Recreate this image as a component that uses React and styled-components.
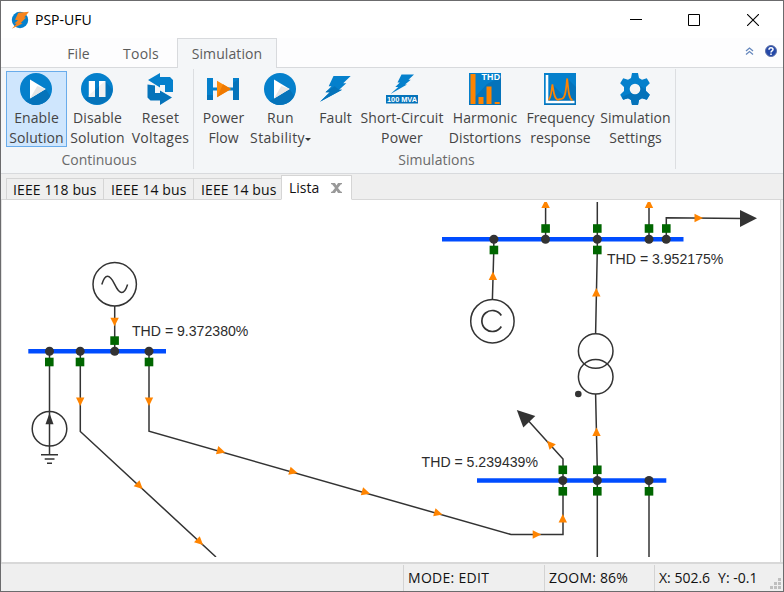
import React from "react";
import styled, { createGlobalStyle } from "styled-components";

const Global = createGlobalStyle`
  * { box-sizing: border-box; }
  html, body { margin: 0; padding: 0; overflow: hidden; }
  body { font-family: "Open Sans", "Noto Sans", sans-serif; font-size: 14px; color: #444; }
`;

const Window = styled.div`
  width: 784px;
  height: 592px;
  border: 1px solid #6b6b6d;
  background: #fff;
  display: flex;
  flex-direction: column;
`;

const TitleBar = styled.header`
  height: 37px;
  display: flex;
  align-items: center;
  padding-left: 10px;
  flex: none;
`;

const Label = styled.span`
  font-stretch: 90%;
  letter-spacing: ${(p) => p.$track || 0}px;
  white-space: pre;
`;

const AppTitle = styled(Label)`
  color: #000;
  margin: 0 0 1px 6px;
`;

const Controls = styled.div`
  margin-left: auto;
  margin-right: 1px;
  display: flex;
`;

const Control = styled.div`
  width: 58.5px;
  height: 36px;
  display: grid;
  place-items: center;
`;

const Menu = styled.nav`
  height: 30px;
  flex: none;
  display: flex;
  background: #fdfdfe;
  box-shadow: inset 0 -1px #d8dadd;
`;

const MenuItem = styled.div`
  width: ${(p) => p.$w}px;
  margin-left: ${(p) => p.$gap || 0}px;
  height: 30px;
  line-height: 29px;
  text-align: center;
  color: #5c5c5c;
  border: ${(p) => (p.$active ? "1px solid #d8dadd" : "1px solid transparent")};
  border-bottom: 0;
  background: ${(p) => (p.$active ? "#f4f6f8" : "transparent")};
`;

const MenuTools = styled.div`
  margin-left: auto;
  display: flex;
  align-items: center;
  gap: 11px;
  padding: 0 6px 4px 0;
`;

const Ribbon = styled.section`
  height: 106px;
  flex: none;
  display: flex;
  background: #f4f6f8;
  border-bottom: 1px solid #d8dadd;
  padding-top: 1px;
`;

const Group = styled.div`
  width: ${(p) => p.$w}px;
  height: 100px;
  border-right: 1px solid #dcdee1;
  display: flex;
  flex-direction: column;
`;

const GroupButtons = styled.div`
  display: flex;
  padding: 2px 0 0 ${(p) => p.$pad}px;
`;

const GroupTitle = styled.div`
  line-height: 20px;
  margin-top: 3px;
  text-align: center;
  color: #6a6a6a;
  padding-left: ${(p) => p.$shift || 0}px;
`;

const Button = styled.div`
  width: ${(p) => p.$w}px;
  height: 76px;
  border: 1px solid ${(p) => (p.$active ? "#69aceb" : "transparent")};
  background: ${(p) => (p.$active ? "#cfe6fd" : "transparent")};
  display: flex;
  flex-direction: column;
  align-items: center;
  padding-top: 1px;
  svg { display: block; flex: none; margin-right: ${(p) => p.$w % 2}px; }
`;

const Caption = styled(Label)`
  line-height: 20px;
  height: 20px;
  display: flex;
  align-items: center;
  &:nth-of-type(1) { margin-top: 3px; }
`;

const Caret = styled.i`
  border: 3px solid transparent;
  border-top-color: #333;
  border-bottom: 0;
  margin-top: 2px;
`;

const DocTabs = styled.div`
  height: 26px;
  flex: none;
  display: flex;
  align-items: flex-end;
  background: #efefef;
  padding-left: 5px;
  box-shadow: inset 0 -1px #d8d8d8;
`;

const DocTab = styled.div`
  width: ${(p) => p.$w}px;
  height: ${(p) => (p.$active ? 25 : 22)}px;
  line-height: 20px;
  padding: ${(p) => (p.$active ? 2 : 1)}px 0 0 ${(p) => p.$pad}px;
  display: flex;
  align-items: flex-start;
  color: #111;
  background: ${(p) => (p.$active ? "#fff" : "#efefef")};
  border: 1px solid #d5d5d5;
  border-bottom-color: ${(p) => (p.$active ? "#fff" : "#d5d5d5")};
  border-right-width: ${(p) => (p.$active ? 1 : 0)}px;
  svg { margin: 5px 9px 0 auto; }
`;

const Canvas = styled.main`
  height: 363px;
  flex: none;
  background: #efefef;
  border-bottom: 1px solid #d8d8d8;
  svg { display: block; background: #fff; border-left: 1px solid #e2e2e2; border-right: 1px solid #d8d8d8; }
`;

const StatusBar = styled.footer`
  flex: 1;
  display: flex;
  background: #efefef;
  border-top: 1px solid #d8d8d8;
  padding-left: 402px;
  color: #111;
`;

const StatusCell = styled.div`
  width: ${(p) => p.$w}px;
  margin-top: 1px;
  border-left: 1px solid #d3d3d3;
  padding-left: 4px;
  line-height: 26px;
  display: flex;
  gap: ${(p) => p.$gap || 0}px;
`;

const Grip = styled.div`
  margin-left: auto;
  align-self: flex-end;
  padding: 0 2px 2px 0;
  svg { display: block; }
`;

const BLUE = "#0580cc";
const DEEP = "#0573ba";
const ORANGE = "#ff8400";
const INK = "#333";

const Logo = () => (
  <svg width="18" height="18" viewBox="0 0 18 18">
    <circle cx="9" cy="9" r="8.2" fill={BLUE} />
    <path d="M7.3 1.7 18 .8 13.2 6.5l2 .1L9.7 12l2 .4L.8 17.8l4.8-5-2.3-.4L7 9.2l-3-.4z" fill="#f5841f" />
  </svg>
);

const PlayIcon = () => (
  <svg width="32" height="32" viewBox="0 0 32 32">
    <circle cx="16" cy="16" r="16" fill={BLUE} />
    <path d="M10 25.5 25.5 16l4.8 7.1A16 16 0 0 1 5.5 28z" fill={DEEP} />
    <path d="M10 6.5v19L25.7 16z" fill="#fff" />
    <path d="m10 25.5 7.3-12.4L25.7 16z" fill="#e6e6e6" />
  </svg>
);

const PauseIcon = () => (
  <svg width="32" height="32" viewBox="0 0 32 32">
    <circle cx="16" cy="16" r="16" fill={BLUE} />
    <path d="M4 26 24 8l7.7 9A16 16 0 0 1 5 27z" fill={DEEP} />
    <path d="M7.8 8H14v16H7.8zM18 8h6.3v16H18z" fill="#fff" />
    <path d="M7.8 22.3 14 16.8V24H7.8zM18 13.2 24.3 8v16H18z" fill="#f1f1f1" />
  </svg>
);

const ResetIcon = () => (
  <svg width="32" height="32" viewBox="0 0 32 32">
    <path d="M4 7 16 0v4h10l3 3v12h-8v-7h-5v2.5z" fill={BLUE} />
    <path d="M3.5 11.500 11 12.500V20h5v-2.500L28 24.500 16 32v-4.500H6.500l-3-3z" fill={DEEP} />
  </svg>
);

const FlowIcon = () => (
  <svg width="32" height="32" viewBox="0 0 32 32">
    <path d="M0 5h6v22H0zM26 5h6v22h-6zM6 14.5h20v3H6z" fill={BLUE} />
    <path d="M0 22h6v5H0zM26 10l6-4v21h-6z" fill={DEEP} />
    <path d="M10 7.8v16.4L24 16z" fill="#ff8c0a" />
    <path d="m10 24.2 6-12.9L24 16z" fill="#ef7900" />
  </svg>
);

const FaultIcon = () => (
  <svg width="32" height="32" viewBox="0 0 32 32">
    <path d="M14.5 3h17.2l-7.5 7.3h3.1l-7.2 6.4h3L1 28.8l9.8-9.6H6.5l6-6H9.7z" fill={BLUE} />
    <path d="m15.7 13.3 4.4 3.4h3L1 28.8l9.8-9.6H6.5l1-1z" fill={DEEP} />
  </svg>
);

const ShortCircuitIcon = () => (
  <svg width="32" height="32" viewBox="0 0 32 32">
    <path d="M15.500 1.500H28l-5.500 5.300h2.300L19 11.500h2L4.500 21l7.800-7.100h-3l4.500-4.500h-2.300z" fill={BLUE} />
    <path d="M0 22h32v8.500H0z" fill={DEEP} />
    <text x="16" y="29" textAnchor="middle" fill="#fff" fontFamily="Liberation Sans, sans-serif" fontWeight="700" fontSize="7.4" textLength="30">100 MVA</text>
  </svg>
);

const HarmonicIcon = () => (
  <svg width="32" height="32" viewBox="0 0 32 32">
    <path d="M0 0h32v32H0z" fill={BLUE} />
    <path d="m0 28 6-4 12-13 14-7v28H0z" fill={DEEP} />
    <path d="M1.5 1H6.5v30H1.5zM9.5 24h5v7h-5zM17.5 13.5h5V31h-5zM25.7 29h5v2h-5z" fill={ORANGE} />
    <text x="12.5" y="7.4" fill="#fff" fontFamily="Liberation Sans, sans-serif" fontWeight="700" fontSize="8.8" textLength="18.5">THD</text>
  </svg>
);

const FrequencyIcon = () => (
  <svg width="32" height="32" viewBox="0 0 32 32">
    <path d="M0 0h32v32H0z" fill={BLUE} />
    <path d="m3 29 5-18 13 13 2-19 9 9v18H0z" fill={DEEP} />
    <path d="M3 2v27h27.5" fill="none" stroke="#fff" strokeWidth="2.6" />
    <path d="M4.5 27C7.2 25 7.3 18 8.4 11.5 9.7 18 10 26.2 14 26.8c1.6-1.3 2-.2 4-1C22.3 24.5 22 13 23.2 5.5 24.3 13 24 26 28.5 27.3" fill="none" stroke={ORANGE} strokeWidth="1.7" />
  </svg>
);

const GearIcon = () => (
  <svg width="32" height="32" viewBox="0 0 32 32">
    <path d="M13 0h6l1 5 3 1.7 4.8-1.5 3 5.1L27 14v4l3.8 3.7-3 5.1L23 25.3 20 27l-1 5h-6l-1-5-3-1.7-4.8 1.5-3-5.1L5 18v-4l-3.8-3.7 3-5.1L9 6.7 12 5z" fill={BLUE} />
    <path d="m12 20 8-8 7 5v1l3.8 3.7-3 5.1L23 25.3 20 27l-1 5h-6l-1-5-3-1.7-4.8 1.5L2.7 24z" fill={DEEP} />
    <circle cx="16" cy="16" r="5.3" fill="#f5f5f5" />
  </svg>
);

const RIBBON = [
  {
    title: "Continuous", w: 193, pad: 5, shift: 4,
    buttons: [
      { w: 61, icon: PlayIcon, lines: ["Enable", "Solution"], active: true, track: 0.1 },
      { w: 61, icon: PauseIcon, lines: ["Disable", "Solution"], track: 0.1 },
      { w: 65, icon: ResetIcon, lines: ["Reset", "Voltages"], track: 0.3 },
    ],
  },
  {
    title: "Simulations", w: 482, pad: 4, shift: 4,
    buttons: [
      { w: 51, icon: FlowIcon, lines: ["Power", "Flow"] },
      { w: 63, icon: PlayIcon, lines: ["Run", "Stability"], caret: true, track: 0.35 },
      { w: 47, icon: FaultIcon, lines: ["Fault"], track: 0.1 },
      { w: 86, icon: ShortCircuitIcon, lines: ["Short-Circuit", "Power"], track: 0.1 },
      { w: 80, icon: HarmonicIcon, lines: ["Harmonic", "Distortions"], track: 0.05 },
      { w: 71, icon: FrequencyIcon, lines: ["Frequency", "response"] },
      { w: 79, icon: GearIcon, lines: ["Simulation", "Settings"], track: 0.1 },
    ],
  },
];

const RibbonButton = ({ item }) => {
  const Icon = item.icon;
  return (
    <Button $w={item.w} $active={item.active}>
      <Icon />
      {item.lines.map((line, i) => (
        <Caption key={line} $track={item.track}>
          {line}
          {item.caret && i === 1 && <Caret />}
        </Caption>
      ))}
    </Button>
  );
};

const BUSES = [[28.3, 166, 351.3], [442, 683.5, 239.3], [477, 666.3, 480.5]];
const WIRES = [
  "M114.7 306V351", "M49.5 351V455", "M80.3 351V431.5L216 557",
  "M149 351V431.3L511 534.5H563V459L525 417", "M492.4 299.5 493.8 250V239",
  "M545.6 239V202", "M597.3 239V202", "M649 239V202", "M666.3 239V217.8L742 218.5",
  "M595.6 334 597.3 250V239", "M595.6 394 597.3 470V557", "M649 480V557",
];
const NODES = [
  [49.5, 351.3], [80.2, 351.3], [114.7, 351.3], [149, 351.3],
  [493.9, 239.3], [545.5, 239.3], [597.3, 239.3], [649, 239.3], [666.2, 239.3],
  [562.8, 480.5], [597.3, 480.5], [649, 480.5],
];
const BREAKERS = [
  [49.3, 362], [80, 362], [149, 362], [114.6, 340.6],
  [493.9, 250], [545.6, 228.5], [597.3, 228.5], [597.3, 250], [649, 228.5], [666.3, 228.5],
  [562.8, 469.8], [597.3, 469.8], [562.8, 491.3], [597.3, 491.3], [649, 491.3],
];
// x, y and heading in degrees, where 0 points right
const FLOWS = [
  [114.6, 321.8, 90], [80.2, 401.5, 90], [149, 401.5, 90],
  [139.5, 486, 43], [199.8, 542, 43],
  [221, 451.2, 16], [293.3, 471.8, 16], [365.8, 492.4, 16], [438.2, 513.3, 16],
  [536.7, 534.5, 0], [562.8, 518.5, -90], [550, 444, -132],
  [596.5, 432, -90], [596.3, 292.5, -90], [492.9, 276, -90],
  [545.6, 204, -90], [649, 204, -90], [698.5, 218, 0],
];
const READINGS = [[132, 335.6, "THD = 9.372380%"], [607, 264, "THD = 3.952175%"], [421.6, 466.6, "THD = 5.239439%"]];

const Diagram = () => (
  <svg width="780" height="362" viewBox="2 200 778 362">
    <defs>
      <clipPath id="sheet"><rect x="2" y="202" width="778" height="355" /></clipPath>
    </defs>
    <g clipPath="url(#sheet)" fill="none" stroke={INK} strokeWidth="1.5">
      {BUSES.map(([a, b, y]) => <path key={y} d={`M${a} ${y}H${b}`} stroke="#004cff" strokeWidth="4.4" />)}
      {WIRES.map((d) => <path key={d} d={d} />)}
      <circle cx="114.7" cy="284.3" r="21.7" />
      <path d="M101.8 284.5C105 273.5 109.5 273.5 114.7 284.3S124 295.5 127.6 284.5" />
      <circle cx="49.5" cy="428.8" r="17.3" />
      <path d="M41 454.7H58M44.7 459H54.5M47 463.3H52" />
      <circle cx="492.4" cy="321.2" r="21.7" />
      <path d="M501.3 315.5A10.5 10.5 0 1 0 501.3 326.5" strokeWidth="1.7" />
      <circle cx="595.7" cy="351" r="17.3" />
      <circle cx="595.7" cy="376.8" r="17.3" />
      <g fill={INK} stroke="none">
        <path d="M49.5 413 53.5 424.3H45.5Z" />
        <path d="M740 210V227L757 218.3Z" />
        <path d="M516.8 410 535.3 416 523.3 427.5Z" />
        <circle cx="578.3" cy="394" r="3.3" />
        {NODES.map(([x, y]) => <circle key={`${x},${y}`} cx={x} cy={y} r="4.5" />)}
      </g>
      <g fill="#006600" stroke="none">
        {BREAKERS.map(([x, y]) => <rect key={`${x},${y}`} x={x - 4.3} y={y - 4.3} width="8.6" height="8.6" />)}
      </g>
      <g fill={ORANGE} stroke="none">
        {FLOWS.map(([x, y, a]) => (
          <path key={`${x},${y}`} d="M-4-4.2V4.2L4.5 0Z" transform={`translate(${x} ${y}) rotate(${a})`} />
        ))}
      </g>
      <g fill="#2c2c2c" stroke="none" fontFamily="Liberation Sans, Arial, sans-serif" fontSize="14.1">
        {READINGS.map(([x, y, t]) => <text key={t} x={x} y={y}>{t}</text>)}
      </g>
    </g>
  </svg>
);

export default function App() {
  return (
    <>
      <Global />
      <Window>
        <TitleBar>
          <Logo />
          <AppTitle>PSP-UFU</AppTitle>
          <Controls>
            <Control><svg width="12" height="12"><path d="M0 5.5H12" stroke="#000" /></svg></Control>
            <Control><svg width="12" height="12"><path d="M.5.5h11v11H.5z" fill="none" stroke="#000" /></svg></Control>
            <Control><svg width="12" height="12"><path d="m0 0 12 12M12 0 0 12" stroke="#000" strokeWidth="1.1" /></svg></Control>
          </Controls>
        </TitleBar>
        <Menu>
          <MenuItem $w={53} $gap={51}><Label $track={0.1}>File</Label></MenuItem>
          <MenuItem $w={72}><Label $track={0.2}>Tools</Label></MenuItem>
          <MenuItem $w={100} $active><Label $track={0.1}>Simulation</Label></MenuItem>
          <MenuTools>
            <svg width="9" height="8" viewBox="0 0 9 8"><path d="m1 4 3.5-3L8 4M1 7.5l3.5-3 3.5 3" fill="none" stroke="#6688bd" strokeWidth="1.3" /></svg>
            <svg width="12" height="12" viewBox="0 0 12 12">
              <circle cx="6" cy="6" r="5.5" fill="#2448a8" stroke="#6072a8" />
              <path d="M4 4.7C4 2.2 8 2.2 8 4.5 8 6 6 5.8 6 7.5M6 8.5V10" fill="none" stroke="#fff" strokeWidth="1.5" />
            </svg>
          </MenuTools>
        </Menu>
        <Ribbon>
          {RIBBON.map((g) => (
            <Group key={g.title} $w={g.w}>
              <GroupButtons $pad={g.pad}>
                {g.buttons.map((b) => <RibbonButton key={b.lines[0]} item={b} />)}
              </GroupButtons>
              <GroupTitle $shift={g.shift}><Label>{g.title}</Label></GroupTitle>
            </Group>
          ))}
        </Ribbon>
        <DocTabs>
          <DocTab $w={97} $pad={6}><Label $track={0.1}>IEEE 118 bus</Label></DocTab>
          <DocTab $w={90} $pad={7}><Label $track={0.1}>IEEE 14 bus</Label></DocTab>
          <DocTab $w={88} $pad={7}><Label $track={0.1}>IEEE 14 bus</Label></DocTab>
          <DocTab $w={71} $pad={7} $active>
            <Label>Lista</Label>
            <svg width="11" height="10" viewBox="0 0 11 10"><path d="M0 0h4l1.5 2.5L7 0h4v1.2h-1L7 5l3 3.8h1V10H7L5.5 7.5 4 10H0V8.8h1L4 5 1 1.2H0z" fill="#999" /></svg>
          </DocTab>
        </DocTabs>
        <Canvas><Diagram /></Canvas>
        <StatusBar>
          <StatusCell $w={141}><Label $track={0.3}>MODE: EDIT</Label></StatusCell>
          <StatusCell $w={110}><Label $track={0.2}>ZOOM: 86%</Label></StatusCell>
          <StatusCell $w={105} $gap={8}><Label>X: 502.6</Label><Label>Y: -0.1</Label></StatusCell>
          <Grip>
            <svg width="11" height="11" viewBox="0 0 11 11"><path d="M8 0h3v3H8zM4 4h3v3H4zM8 4h3v3H8zM0 8h3v3H0zM4 8h3v3H4zM8 8h3v3H8z" fill="#bfbfbf" /></svg>
          </Grip>
        </StatusBar>
      </Window>
    </>
  );
}
